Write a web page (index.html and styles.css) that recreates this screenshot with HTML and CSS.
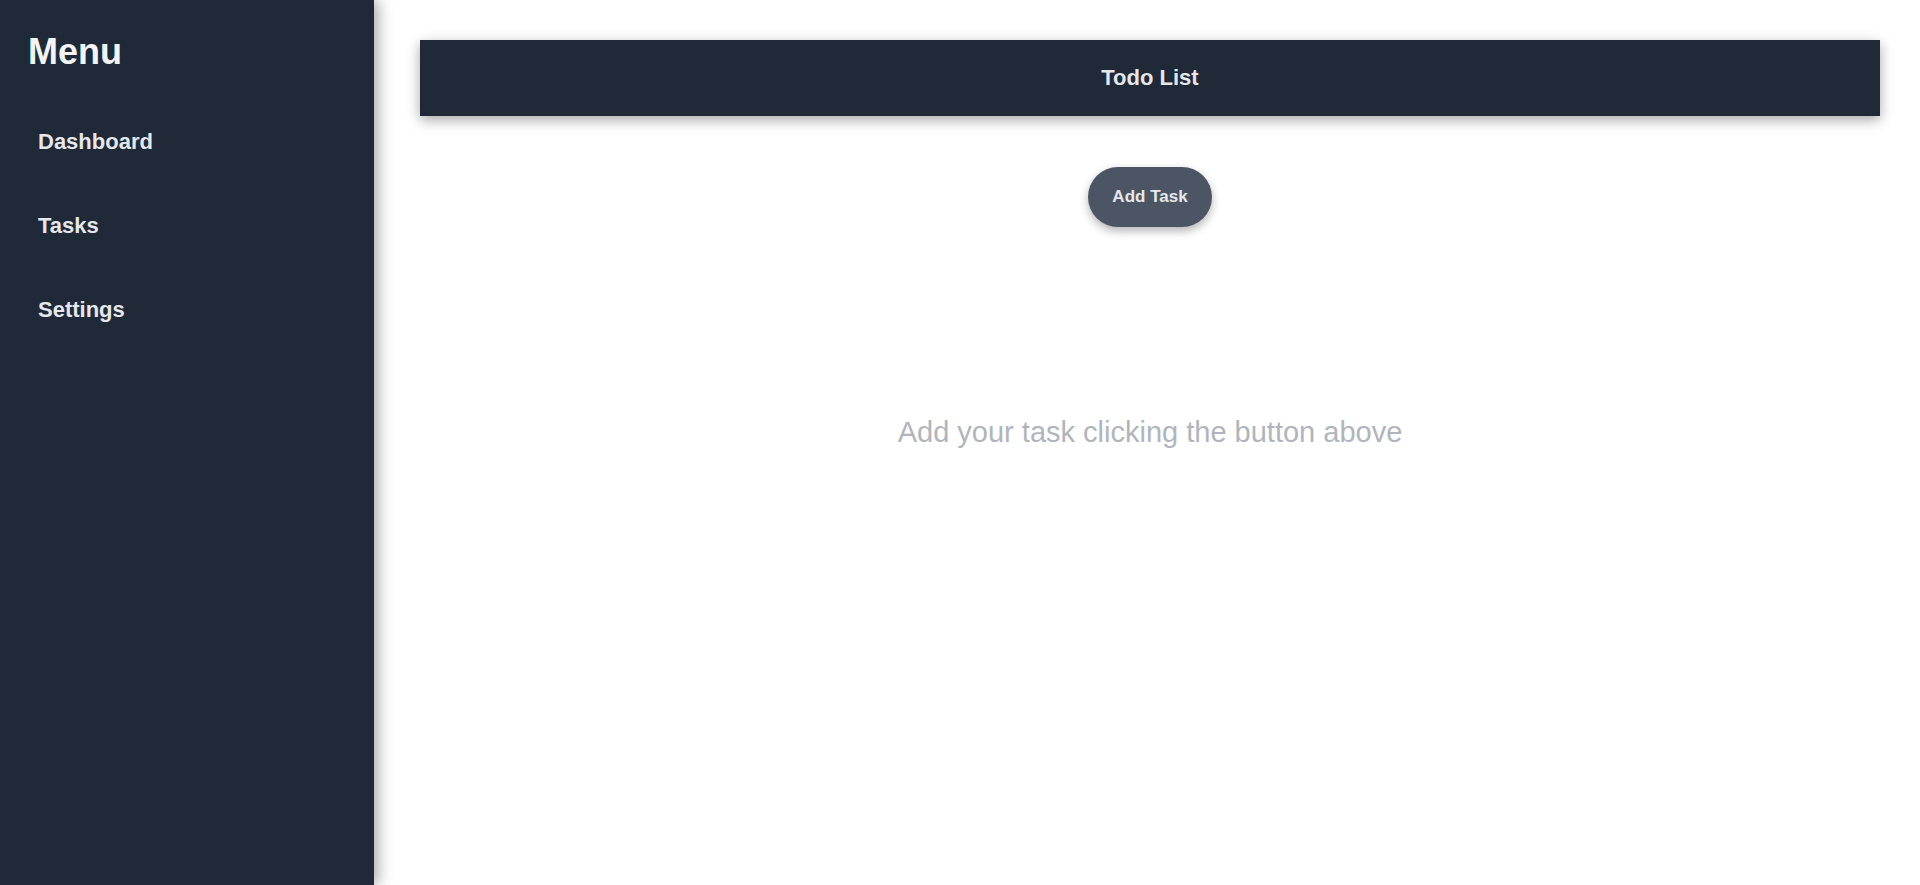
FILE: index.html
```html
<!DOCTYPE html>
<html lang="en">
<head>
<meta charset="utf-8">
<title>Todo List</title>
<link rel="stylesheet" href="styles.css">
</head>
<body>
<div class="layout">
  <aside class="sidebar">
    <h2 class="sidebar-title">Menu</h2>
    <nav class="nav">
      <a class="nav-link" href="#">Dashboard</a>
      <a class="nav-link" href="#">Tasks</a>
      <a class="nav-link" href="#">Settings</a>
    </nav>
  </aside>
  <main class="main">
    <header class="page-header">
      <h1 class="page-title">Todo List</h1>
    </header>
    <div class="actions">
      <button class="add-btn" type="button">Add Task</button>
    </div>
    <p class="empty">Add your task clicking the button above</p>
  </main>
</div>
</body>
</html>
```

FILE: styles.css
```css
* { box-sizing: border-box; }

html, body {
  margin: 0;
  padding: 0;
  height: 100%;
  background: #ffffff;
  font-family: "Liberation Sans", Arial, sans-serif;
}

.layout {
  display: flex;
  height: 100vh;
}

.sidebar {
  width: 374px;
  flex-shrink: 0;
  background: #1f2937;
  color: #ffffff;
  padding: 30px 28px;
  box-shadow: 4px 0 14px rgba(0, 0, 0, 0.35);
  position: relative;
  z-index: 1;
}

.sidebar-title {
  margin: 0;
  font-size: 36px;
  line-height: 44px;
  font-weight: 700;
  color: #f3f4f6;
}

.nav {
  display: flex;
  flex-direction: column;
  gap: 24px;
  margin-top: 38px;
}

.nav-link {
  display: block;
  padding: 16px 10px;
  font-size: 22px;
  line-height: 28px;
  color: #e5e7eb;
  text-decoration: none;
  font-weight: 600;
}

.main {
  flex: 1;
  padding: 40px 40px 40px 46px;
  display: flex;
  flex-direction: column;
  align-items: center;
}

.page-header {
  width: 100%;
  background: #1f2937;
  padding: 24px;
  text-align: center;
  box-shadow: 0 4px 12px rgba(0, 0, 0, 0.35);
}

.page-title {
  margin: 0;
  font-size: 22px;
  line-height: 28px;
  font-weight: 700;
  color: #e5e7eb;
}

.actions {
  margin-top: 51px;
}

.add-btn {
  font-family: inherit;
  font-size: 17px;
  line-height: 24px;
  font-weight: 700;
  color: #e5e7eb;
  background: #4b5563;
  border: none;
  border-radius: 9999px;
  padding: 18px 24px;
  box-shadow: 0 4px 10px rgba(0, 0, 0, 0.3);
  cursor: pointer;
}

.empty {
  margin: 187px 0 0;
  font-size: 29px;
  line-height: 36px;
  color: #b0b5bd;
}
```
